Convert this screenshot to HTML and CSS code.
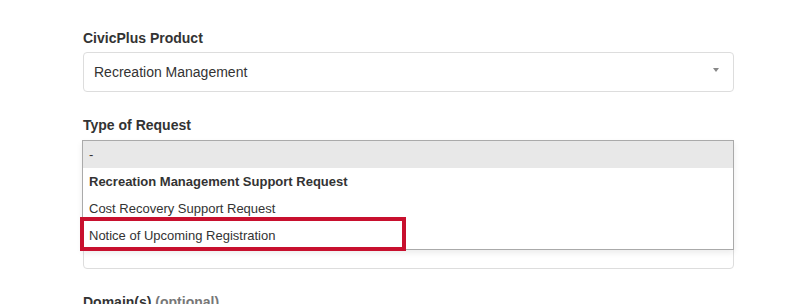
FILE: index.html
```html
<!DOCTYPE html>
<html>
<head>
<meta charset="utf-8">
<link rel="stylesheet" href="styles.css">
</head>
<body>
<form class="form">
  <div class="group">
    <label class="label">CivicPlus Product</label>
    <div class="select">
      <span class="select-text">Recreation Management</span>
      <span class="arrow"></span>
    </div>
  </div>
  <div class="group">
    <label class="label">Type of Request</label>
    <div class="field">
      <ul class="dropdown">
        <li class="opt opt-selected">-</li>
        <li class="opt opt-bold">Recreation Management Support Request</li>
        <li class="opt">Cost Recovery Support Request</li>
        <li class="opt">Notice of Upcoming Registration</li>
      </ul>
      <div class="highlight"></div>
    </div>
  </div>
  <div class="group">
    <label class="label">Domain(s) <span class="muted">(optional)</span></label>
  </div>
</form>
</body>
</html>
```

FILE: styles.css
```css
* { box-sizing: border-box; }
html, body { margin: 0; padding: 0; background: #fff; }
body {
  font-family: "Liberation Sans", Arial, sans-serif;
  color: #333;
  font-size: 14px;
  overflow: hidden;
  height: 304px;
}
.form {
  padding: 28px 0 0 83px;
  width: 734px;
}
.group { margin-bottom: 23px; }
.label {
  display: block;
  font-weight: bold;
  font-size: 14px;
  line-height: 20px;
  margin-bottom: 4px;
}
.muted { color: #777; }
.select {
  height: 40px;
  border: 1px solid #ddd;
  border-radius: 4px;
  display: flex;
  align-items: center;
  justify-content: space-between;
  padding: 0 14px 0 10px;
  font-size: 14px;
}
.arrow {
  width: 0;
  height: 0;
  border-left: 3px solid transparent;
  border-right: 3px solid transparent;
  border-top: 4px solid #888;
  margin-top: -4px;
}
.field {
  position: relative;
  margin-top: 5px;
  height: 129px;
  border: 1px solid #ddd;
  border-radius: 4px;
}
.dropdown {
  position: absolute;
  top: -1px;
  left: -2px;
  width: 652px;
  margin: 0;
  padding: 0;
  list-style: none;
  border: 1px solid #aaa;
  background: #fff;
  box-shadow: 0 3px 6px rgba(0,0,0,0.08);
}
.opt {
  height: 27px;
  line-height: 27px;
  padding-left: 6px;
  font-size: 13px;
  color: #333;
}
.opt-selected { background: #e8e8e8; }
.opt-bold { font-weight: bold; }
.highlight {
  position: absolute;
  left: -4px;
  top: 76px;
  width: 326px;
  height: 34px;
  border: 4px solid #c8102e;
}
```
